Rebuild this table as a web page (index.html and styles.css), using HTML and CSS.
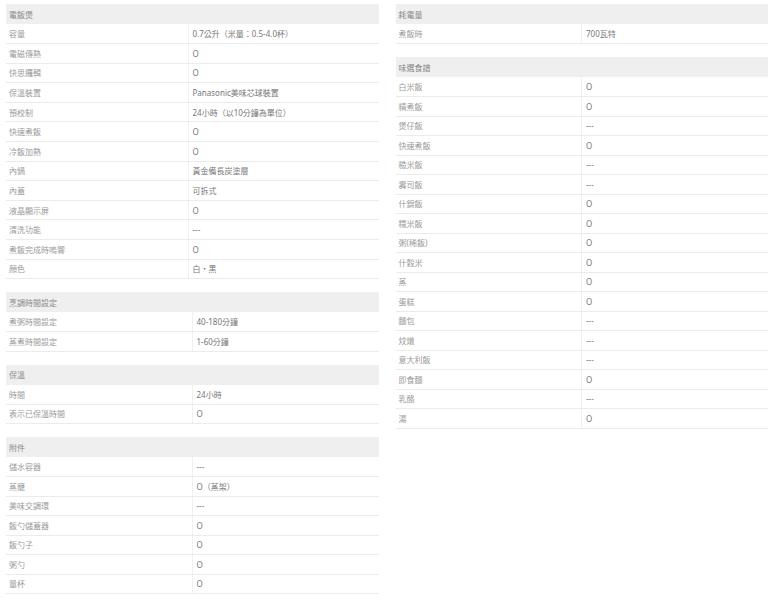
FILE: index.html
```html
<!DOCTYPE html>
<html lang="zh-Hant">
<head>
<meta charset="utf-8">
<link rel="stylesheet" href="styles.css">
</head>
<body>
<div class="page">
  <div class="col">
    <table class="spec first">
      <colgroup><col class="ck"><col></colgroup>
      <tr class="head"><th colspan="2">電飯煲</th></tr>
      <tr><td class="k">容量</td><td class="v">0.7公升（米量：0.5-4.0杯）</td></tr>
      <tr><td class="k">電磁傳熱</td><td class="v">O</td></tr>
      <tr><td class="k">快思邏輯</td><td class="v">O</td></tr>
      <tr><td class="k">保溫裝置</td><td class="v">Panasonic美味芯球裝置</td></tr>
      <tr><td class="k">預校制</td><td class="v">24小時（以10分鐘為單位）</td></tr>
      <tr><td class="k">快速煮飯</td><td class="v">O</td></tr>
      <tr><td class="k">冷飯加熱</td><td class="v">O</td></tr>
      <tr><td class="k">內鍋</td><td class="v">黃金備長炭塗層</td></tr>
      <tr><td class="k">內蓋</td><td class="v">可拆式</td></tr>
      <tr><td class="k">液晶顯示屏</td><td class="v">O</td></tr>
      <tr><td class="k">清洗功能</td><td class="v">---</td></tr>
      <tr><td class="k">煮飯完成時嗚響</td><td class="v">O</td></tr>
      <tr><td class="k">顏色</td><td class="v">白・黑</td></tr>
    </table>
    <table class="spec">
      <colgroup><col class="ck"><col></colgroup>
      <tr class="head"><th colspan="2">烹調時間設定</th></tr>
      <tr><td class="k">煮粥時間設定</td><td class="v">40-180分鐘</td></tr>
      <tr><td class="k">蒸煮時間設定</td><td class="v">1-60分鐘</td></tr>
    </table>
    <table class="spec">
      <colgroup><col class="ck"><col></colgroup>
      <tr class="head"><th colspan="2">保溫</th></tr>
      <tr><td class="k">時間</td><td class="v">24小時</td></tr>
      <tr><td class="k">表示已保溫時間</td><td class="v">O</td></tr>
    </table>
    <table class="spec">
      <colgroup><col class="ck"><col></colgroup>
      <tr class="head"><th colspan="2">附件</th></tr>
      <tr><td class="k">儲水容器</td><td class="v">---</td></tr>
      <tr><td class="k">蒸籠</td><td class="v">O（蒸架）</td></tr>
      <tr><td class="k">美味交調環</td><td class="v">---</td></tr>
      <tr><td class="k">飯勺儲蓋器</td><td class="v">O</td></tr>
      <tr><td class="k">飯勺子</td><td class="v">O</td></tr>
      <tr><td class="k">粥勺</td><td class="v">O</td></tr>
      <tr><td class="k">量杯</td><td class="v">O</td></tr>
    </table>
  </div>
  <div class="col">
    <table class="spec right">
      <colgroup><col class="ck"><col></colgroup>
      <tr class="head"><th colspan="2">耗電量</th></tr>
      <tr><td class="k">煮飯時</td><td class="v">700瓦特</td></tr>
    </table>
    <table class="spec right">
      <colgroup><col class="ck"><col></colgroup>
      <tr class="head"><th colspan="2">味選食譜</th></tr>
      <tr><td class="k">白米飯</td><td class="v">O</td></tr>
      <tr><td class="k">精煮飯</td><td class="v">O</td></tr>
      <tr><td class="k">煲仔飯</td><td class="v">---</td></tr>
      <tr><td class="k">快速煮飯</td><td class="v">O</td></tr>
      <tr><td class="k">糙米飯</td><td class="v">---</td></tr>
      <tr><td class="k">壽司飯</td><td class="v">---</td></tr>
      <tr><td class="k">什錦飯</td><td class="v">O</td></tr>
      <tr><td class="k">糯米飯</td><td class="v">O</td></tr>
      <tr><td class="k">粥(稀飯)</td><td class="v">O</td></tr>
      <tr><td class="k">什穀米</td><td class="v">O</td></tr>
      <tr><td class="k">蒸</td><td class="v">O</td></tr>
      <tr><td class="k">蛋糕</td><td class="v">O</td></tr>
      <tr><td class="k">麵包</td><td class="v">---</td></tr>
      <tr><td class="k">炆燉</td><td class="v">---</td></tr>
      <tr><td class="k">意大利飯</td><td class="v">---</td></tr>
      <tr><td class="k">即食麵</td><td class="v">O</td></tr>
      <tr><td class="k">乳酪</td><td class="v">---</td></tr>
      <tr><td class="k">湯</td><td class="v">O</td></tr>
    </table>
  </div>
</div>
</body>
</html>
```

FILE: styles.css
```css
html, body {
  margin: 0;
  padding: 0;
  background: #ffffff;
}
body {
  font-family: "Noto Sans", "Noto Sans CJK TC", sans-serif;
  font-size: 8px;
  color: #888;
}
.page {
  display: flex;
  gap: 17px;
  padding: 4px 10px 0 6px;
}
.col {
  width: 373px;
  display: flex;
  flex-direction: column;
  gap: 13px;
}
.spec {
  width: 100%;
  border-collapse: collapse;
  table-layout: fixed;
}
.spec .ck {
  width: 186px;
}
.spec.first .ck {
  width: 182px;
}
.spec.right .ck {
  width: 186px;
}
.spec th {
  background: #efefef;
  text-align: left;
  font-weight: normal;
  color: #8a8a8a;
  height: 20px;
  padding: 0 3px;
  box-sizing: border-box;
}
.spec td {
  height: 19.5px;
  padding: 0 3px;
  border-bottom: 1px solid #ebebeb;
  box-sizing: border-box;
  white-space: nowrap;
}
.spec.first td {
  height: 19.6px;
}
.spec .k {
  color: #9a9a9a;
  border-right: 1px solid #f0f0f0;
}
.spec .v {
  color: #777;
  padding-left: 4px;
}
```
